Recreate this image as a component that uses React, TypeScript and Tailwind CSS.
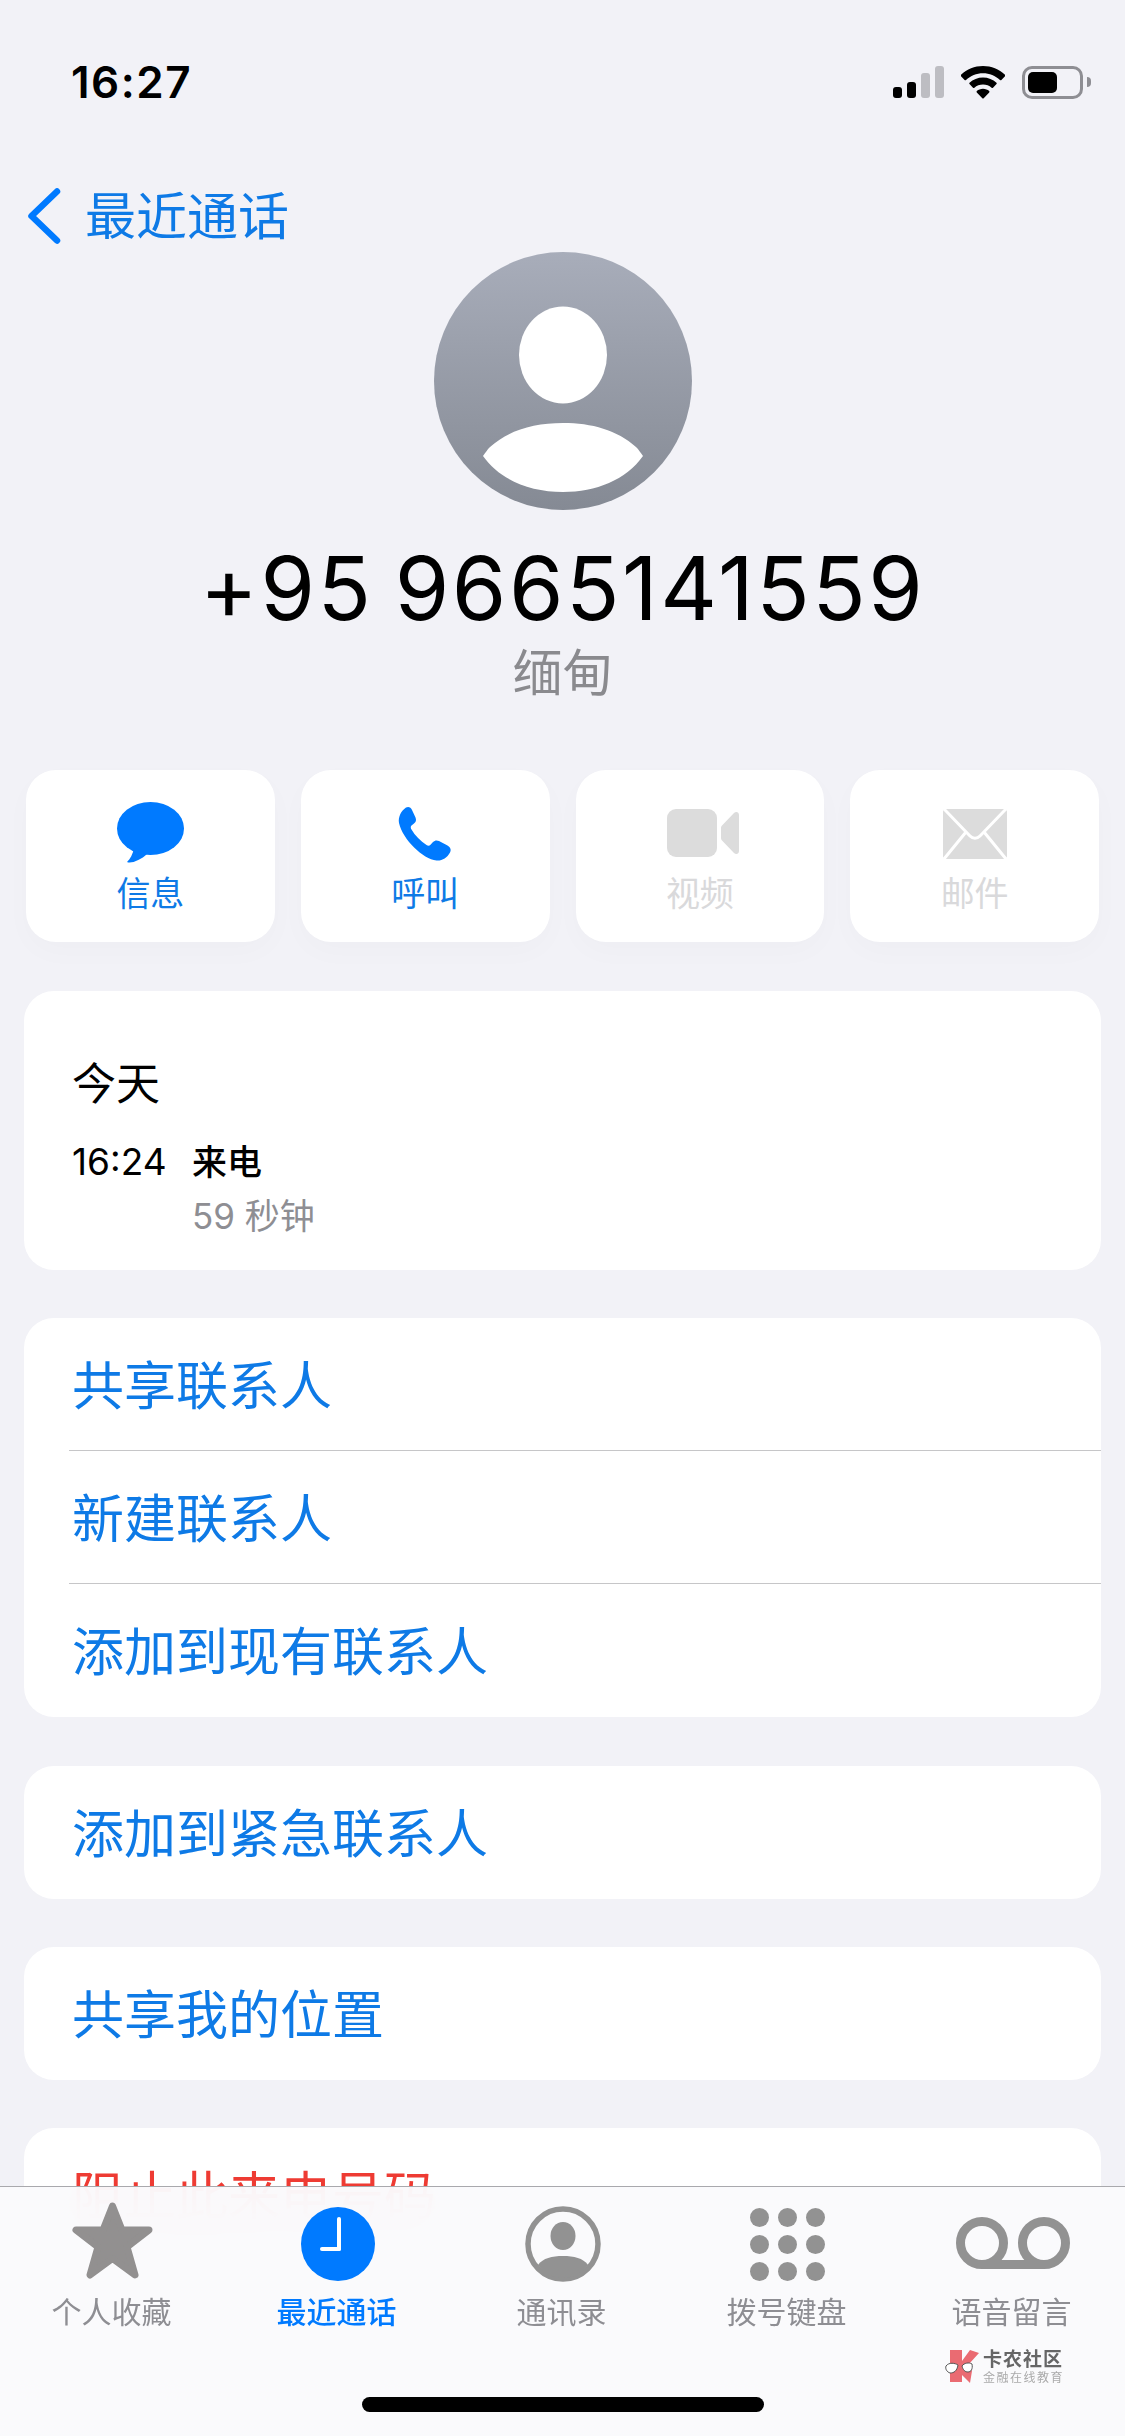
import type { ReactNode } from 'react';

function StatusIcons() {
  return (
    <div className="flex items-center">
      {/* signal */}
      <div className="flex items-end gap-[5px] h-[32px]">
        <div className="w-[9px] h-[11px] rounded-[3px] bg-black" />
        <div className="w-[9px] h-[16px] rounded-[3px] bg-black" />
        <div className="w-[9px] h-[25px] rounded-[3px] bg-[#bdbdc2]" />
        <div className="w-[9px] h-[32px] rounded-[3px] bg-[#bdbdc2]" />
      </div>
      <svg width="44" height="33" viewBox="0 0 44 33" className="ml-[17px]">
        <path d="M22 0C13.5 0 6 3.300 0 8.800C-.4 9.200-.4 9.800 0 10.200L3.600 13.900C4 14.300 4.600 14.300 5 13.900C9.600 9.700 15.500 7.200 22 7.200C28.500 7.200 34.400 9.700 39 13.900C39.400 14.300 40 14.300 40.400 13.900L44 10.200C44.400 9.800 44.400 9.200 44 8.800C38 3.300 30.500 0 22 0Z" fill="#000" />
        <path d="M22 11.500C16.800 11.500 12.100 13.500 8.500 16.700C8.100 17.100 8.100 17.700 8.500 18.100L12 21.700C12.400 22.100 13 22.100 13.400 21.700C15.700 19.800 18.700 18.600 22 18.600C25.300 18.600 28.300 19.800 30.600 21.700C31 22.100 31.600 22.100 32 21.700L35.500 18.100C35.900 17.700 35.900 17.100 35.500 16.700C31.900 13.500 27.200 11.500 22 11.500Z" fill="#000" />
        <path d="M22 22.800C19.600 22.800 17.400 23.700 15.800 25.100C15.400 25.500 15.400 26.100 15.800 26.500L21.300 32.300C21.700 32.700 22.300 32.700 22.700 32.300L28.200 26.500C28.600 26.100 28.600 25.500 28.200 25.100C26.600 23.700 24.400 22.800 22 22.800Z" fill="#000" />
      </svg>
      {/* battery */}
      <div className="ml-[17px] w-[61px] h-[33px] rounded-[10px] border-[3px] border-[#8e8e93] p-[3px]">
        <div className="w-[29px] h-full rounded-[5px] bg-black" />
      </div>
      <div className="ml-[4px] w-[4px] h-[10px] rounded-r-[4px] bg-[#8e8e93]" />
    </div>
  );
}

function Avatar() {
  return (
    <div className="w-[258px] h-[258px] rounded-full bg-gradient-to-b from-[#a8adba] to-[#858a94]">
      <svg width="258" height="258" viewBox="0 0 258 258">
        <ellipse cx="129" cy="103" rx="44" ry="48.500" fill="#fff" />
        <path d="M49 204C52 200 53 198 56 195C75 178 100 171 129 171C158 171 183 178 202 195C205 198 206 200 209 204C192 228 162 240 129 240C96 240 66 228 49 204Z" fill="#fff" />
      </svg>
    </div>
  );
}

function ActionButton({ icon, label, disabled }: { icon: ReactNode; label: string; disabled?: boolean }) {
  return (
    <div className="w-[249px] h-[172px] rounded-[30px] bg-white shadow-[0_10px_30px_rgba(0,0,0,0.02)] flex flex-col items-center">
      <div className="h-[100px] flex items-center justify-center">{icon}</div>
      <span className={`mt-[2px] text-[34px] leading-[44px] ${disabled ? 'text-[#d9d9db]' : 'text-[#0e7ae6]'}`}>{label}</span>
    </div>
  );
}

function ListRow({ label, divider, red }: { label: string; divider?: boolean; red?: boolean }) {
  return (
    <div className="h-[133px] pl-[45px] flex flex-col">
      <div className={`flex-1 flex items-center pt-[5px] text-[52px] ${red ? 'text-[#ee3b33]' : 'text-[#0e7ae6]'}`}>
        <span className="pl-[3px]">{label}</span>
      </div>
      {divider && <div className="h-px bg-[#c6c6c8]" />}
    </div>
  );
}

function TabItem({ icon, label, active }: { icon: ReactNode; label: string; active?: boolean }) {
  return (
    <div className="flex-1 flex flex-col items-center">
      <div className="h-[80px] flex items-center justify-center">{icon}</div>
      <span className={`mt-[8px] -ml-[2px] text-[30px] leading-[40px] ${active ? 'text-[#007aff] font-medium' : 'text-[#8e8e93]'}`}>{label}</span>
    </div>
  );
}

function Dots() {
  const cells = [0, 1, 2, 3, 4, 5, 6, 7, 8];
  return (
    <div className="grid grid-cols-3 gap-x-[9px] gap-y-[8px]">
      {cells.map((c) => (
        <div key={c} className="w-[19px] h-[19px] rounded-full bg-[#929292]" />
      ))}
    </div>
  );
}

export default function App() {
  return (
    <div className="relative w-[1125px] h-[2436px] overflow-hidden bg-[#f2f2f7] text-black font-[Inter,'Noto_Sans_CJK_SC',sans-serif]">
      {/* Status bar */}
      <div className="h-[164px] pl-[71px] pr-[34px] flex items-center justify-between">
        <span className="text-[44px] font-semibold tracking-[1.500px]">16:27</span>
        <StatusIcons />
      </div>

      {/* Nav */}
      <div className="h-[88px] pl-[27px] pt-[16px] flex items-center text-[#0e7ae6]">
        <svg width="34" height="56" viewBox="0 0 34 56" fill="none">
          <path d="M30 3.500L4.500 28L30 52.500" stroke="#007aff" strokeWidth="6.500" strokeLinecap="round" strokeLinejoin="round" />
        </svg>
        <span className="ml-[24px] text-[51px] leading-none">最近通话</span>
      </div>

      {/* Header */}
      <div className="flex flex-col items-center">
        <Avatar />
        <div className="mt-[28px] text-[88px] leading-[100px] tracking-[2.500px] [word-spacing:-6px]">+95 9665141559</div>
        <div className="mt-[5px] text-[50px] leading-[60px] text-[#8a8a8e]">缅甸</div>
      </div>

      <main className="mt-[67px] px-[24px] flex flex-col">
        {/* Actions */}
        <div className="px-[2px] flex gap-[26px]">
          <ActionButton
            label="信息"
            icon={
              <svg width="67" height="62" viewBox="0 0 67 62" className="mt-[26px]">
                <ellipse cx="33.500" cy="26.500" rx="33.500" ry="26.500" fill="#007aff" />
                <path d="M17 46C16 52 13 57 10 60C14 62 24 58 30 52Z" fill="#007aff" />
              </svg>
            }
          />
          <ActionButton
            label="呼叫"
            icon={
              <svg width="54" height="55" viewBox="0 0 54 55" className="mt-[27px]">
                <path d="M8 1.500C10.500 0 13 1.500 14 4L17.500 11.500C18.500 14 18 16 16 17.500L13.500 19.500C12.500 20.500 12.500 22 13.500 23.500C17 29.500 22.500 35 28.500 39C30 40 31.500 39.800 32.500 38.800L35 36C36.800 34.200 38.800 34 41 35L49.500 39.500C52.500 41 53.500 44 52 46.500C49 52 44 55 38.500 54.500C25 53 5 34 1 17C0 11 3 5 8 1.500Z" fill="#007aff" />
              </svg>
            }
          />
          <ActionButton
            disabled
            label="视频"
            icon={
              <svg width="72" height="48" viewBox="0 0 72 48" className="mt-[26px] ml-[7px]">
                <rect width="50" height="48" rx="9" fill="#dcdcdc" />
                <path d="M55 16.500L67 4C69 2 72 3 72 6V42C72 45 69 46 67 44L55 31.500C54.500 31 54 30 54 29V19C54 18 54.500 17 55 16.500Z" fill="#dcdcdc" />
              </svg>
            }
          />
          <ActionButton
            disabled
            label="邮件"
            icon={
              <svg width="64" height="50" viewBox="0 0 64 50" className="mt-[28px]">
                <rect width="64" height="50" rx="3" fill="#dcdcdc" />
                <path d="M1 0L27 27C30 30 34 30 37 27L63 0" stroke="#fff" strokeWidth="3" fill="none" />
                <path d="M1 50L23 23M63 50L41 23" stroke="#fff" strokeWidth="3" fill="none" />
              </svg>
            }
          />
        </div>

        {/* Call history */}
        <section className="mt-[49px] h-[279px] rounded-[30px] bg-white pl-[48px] pt-[65px]">
          <div className="text-[44px] leading-[56px]">今天</div>
          <div className="mt-[28px] flex">
            <span className="w-[120px] text-[37px] leading-[44px]">16:24</span>
            <div className="flex flex-col">
              <span className="text-[35px] leading-[44px] font-medium">来电</span>
              <span className="mt-[10px] text-[35px] leading-[44px] text-[#8e8e93]">59 秒钟</span>
            </div>
          </div>
        </section>

        <section className="mt-[48px] rounded-[30px] bg-white overflow-hidden">
          <ListRow label="共享联系人" divider />
          <ListRow label="新建联系人" divider />
          <ListRow label="添加到现有联系人" />
        </section>
        <section className="mt-[49px] rounded-[30px] bg-white overflow-hidden">
          <ListRow label="添加到紧急联系人" />
        </section>
        <section className="mt-[48px] rounded-[30px] bg-white overflow-hidden">
          <ListRow label="共享我的位置" />
        </section>
        <section className="mt-[48px] rounded-[30px] bg-white overflow-hidden">
          <ListRow label="阻止此来电号码" red />
        </section>
      </main>

      {/* Tab bar */}
      <nav className="absolute left-0 right-0 bottom-0 h-[250px] border-t-[1.5px] border-[#a9a9ad] bg-[#fafafc]/95 backdrop-blur-xl pt-[17px] flex">
        <TabItem
          label="个人收藏"
          icon={
            <svg width="81" height="77" viewBox="0 0 81 77" className="mb-[7px]">
              <path d="M40.500 4L50 28H77L55 45L63 73L40.500 56.500L18 73L26 45L4 28H31Z" fill="#929090" stroke="#929090" strokeWidth="7" strokeLinejoin="round" />
            </svg>
          }
        />
        <TabItem
          active
          label="最近通话"
          icon={
            <div className="relative w-[74px] h-[74px] rounded-full bg-[#007aff]">
              <div className="absolute left-[19px] top-[40px] w-[21px] h-[4px] rounded-full bg-white" />
              <div className="absolute left-[36px] top-[10px] w-[4px] h-[34px] rounded-full bg-white" />
            </div>
          }
        />
        <TabItem
          label="通讯录"
          icon={
            <svg width="76" height="76" viewBox="0 0 76 76">
              <circle cx="38" cy="38" r="35" fill="none" stroke="#929292" strokeWidth="5.500" />
              <ellipse cx="38" cy="30" rx="12.500" ry="14" fill="#929292" />
              <path d="M13 59C18 52 27 50 38 50C49 50 58 52 63 59C57 67 48 72 38 72C28 72 19 67 13 59Z" fill="#929292" />
            </svg>
          }
        />
        <TabItem label="拨号键盘" icon={<Dots />} />
        <TabItem
          label="语音留言"
          icon={
            <svg width="114" height="52" viewBox="0 0 114 52" className="mb-[2px]">
              <circle cx="26" cy="26" r="21.500" fill="none" stroke="#929292" strokeWidth="9" />
              <circle cx="88" cy="26" r="21.500" fill="none" stroke="#929292" strokeWidth="9" />
              <path d="M26 47.500H88" stroke="#929292" strokeWidth="9" />
            </svg>
          }
        />
      </nav>

      {/* Watermark */}
      <div className="absolute left-[945px] top-[2349px] flex items-start">
        <svg width="36" height="35" viewBox="0 0 36 35">
          <path d="M5 1H17V12L25 1L34 4L24 15L27 22L25 34L17 26L17 33H5Z" fill="#ea6b72" />
          <path d="M1 17C4 13 10 14 13 16C12 22 9 24 5 24C2 23 0 20 1 17ZM17 17C19 14 24 13 27 15C28 20 26 23 23 23C20 23 18 21 17 17Z" fill="#fff" stroke="#555" strokeWidth="1" />
        </svg>
        <div className="ml-[2px] flex flex-col items-start">
          <span className="text-[19px] leading-[22px] font-bold text-[#666] tracking-[1px]">卡农社区</span>
          <span className="text-[12px] leading-[14px] text-[#aaa] tracking-[1.5px]">金融在线教育</span>
        </div>
      </div>

      {/* Home indicator */}
      <div className="absolute left-[362px] bottom-[24px] w-[402px] h-[15px] rounded-full bg-black" />
    </div>
  );
}
